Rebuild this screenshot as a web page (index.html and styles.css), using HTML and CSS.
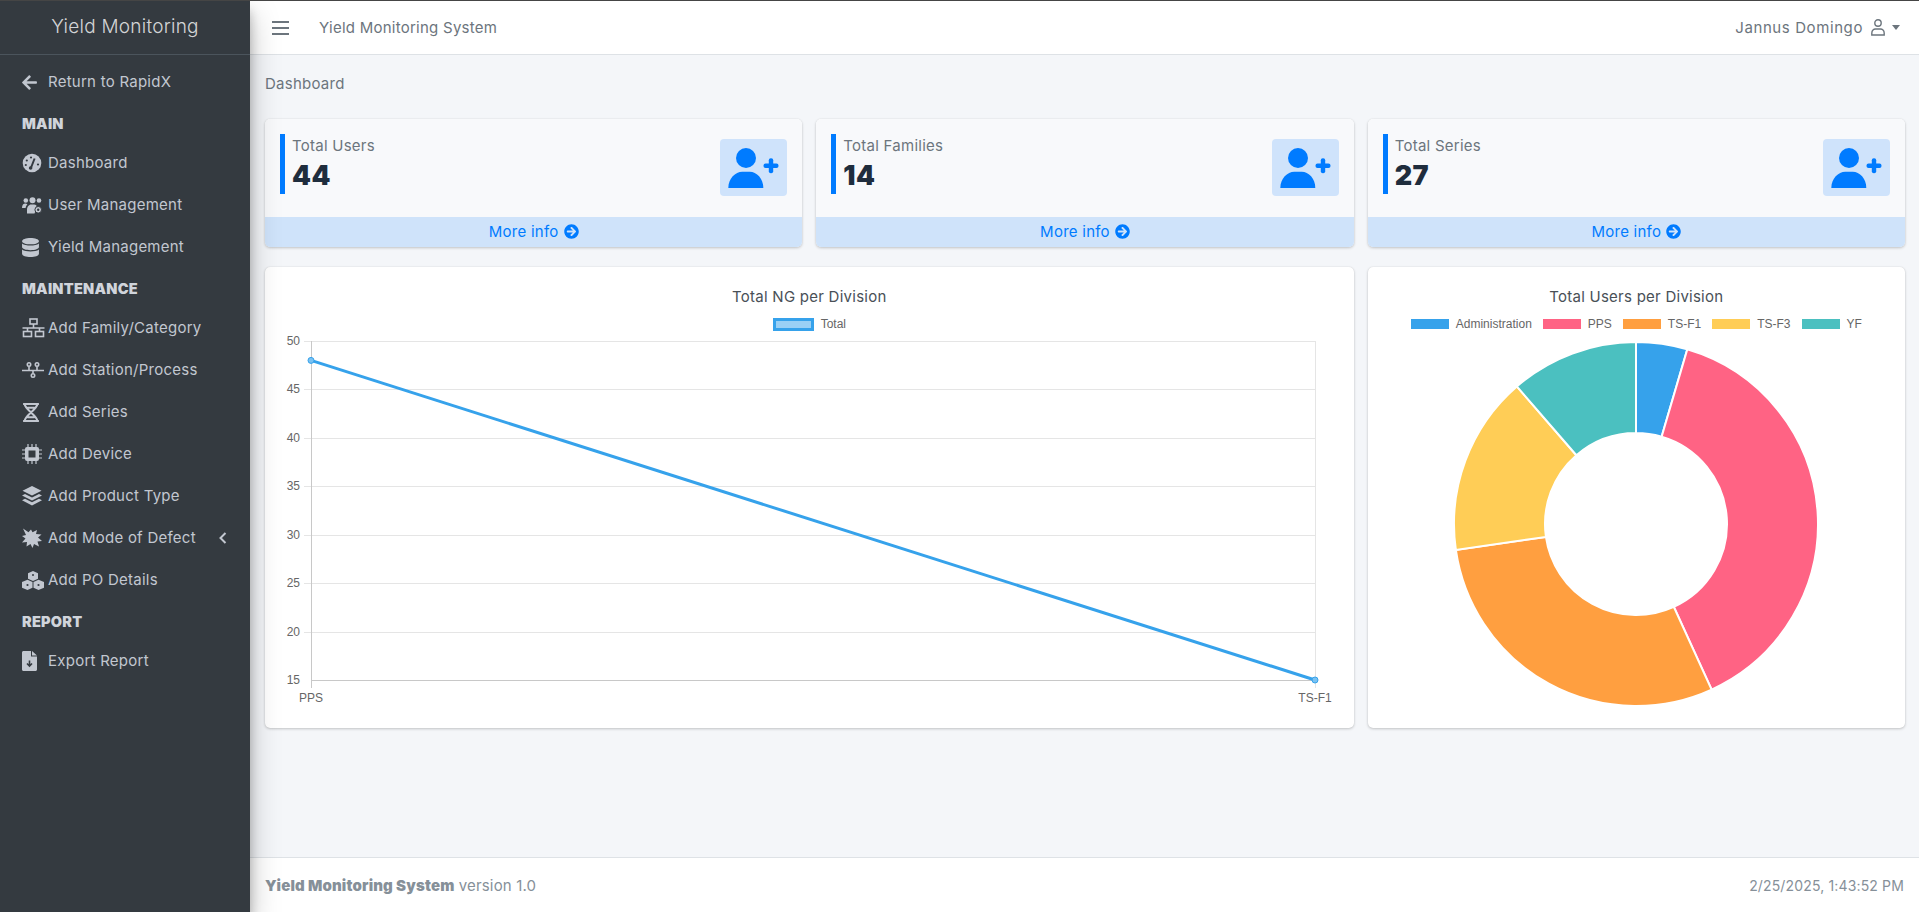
FILE: index.html
```html
<!DOCTYPE html>
<html lang="en">
<head>
  <meta charset="UTF-8">
  <meta name="viewport" content="width=device-width, initial-scale=1.0">
  <title>Yield Monitoring System</title>
  <link rel="stylesheet" href="styles.css">
</head>
<body>
  <svg class="defs" width="0" height="0">
    <symbol id="user-plus" viewBox="0 0 67 57">
      <circle cx="26" cy="19" r="10"/>
      <path d="M8.3 49c0-9.500 7-16.300 14-16.300h7.400c7 0 13.600 6.800 13.600 16.300z"/>
      <rect x="43.500" y="24.500" width="15" height="4.400" rx="2"/>
      <rect x="48.800" y="19.200" width="4.400" height="15" rx="2"/>
    </symbol>
    <symbol id="arrow-circle" viewBox="0 0 512 512">
      <path d="M256 8c137 0 248 111 248 248S393 504 256 504 8 393 8 256 119 8 256 8zm-28.900 143.600l75.500 72.400H120c-13.300 0-24 10.700-24 24v16c0 13.300 10.700 24 24 24h182.600l-75.500 72.400c-9.700 9.300-9.900 24.800-.4 34.300l11 10.900c9.400 9.400 24.600 9.400 33.900 0L404.300 273c9.400-9.400 9.400-24.600 0-33.900L271.600 106.300c-9.400-9.400-24.600-9.400-33.900 0l-11 11c-9.400 9.600-9.200 25.100.4 34.300z"/>
    </symbol>
  </svg>

  <!-- Sidebar -->
  <aside class="sidebar">
    <div class="brand">Yield Monitoring</div>
    <nav class="side-nav">
      <a class="side-link">
        <svg class="side-icon" viewBox="0 0 448 512" width="15" height="17"><path d="M257.500 445.100l-22.200 22.200c-9.400 9.400-24.600 9.400-33.900 0L7 273c-9.400-9.400-9.400-24.600 0-33.900L201.400 44.700c9.400-9.400 24.600-9.400 33.900 0l22.200 22.200c9.500 9.500 9.300 25-.4 34.300L136.600 216H424c13.300 0 24 10.700 24 24v32c0 13.300-10.700 24-24 24H136.600l120.500 114.800c9.800 9.300 10 24.800.4 34.300z"/></svg>
        <span>Return to RapidX</span>
      </a>

      <div class="side-header">MAIN</div>
      <a class="side-link">
        <svg class="side-icon" viewBox="0 0 20 20" width="20" height="20">
          <circle cx="10" cy="10" r="9.300"/>
          <path class="cut" d="M8.700 15.500L12.600 5.500" stroke-width="2"/>
          <circle class="dot" cx="9" cy="4.500" r="1.100"/><circle class="dot" cx="4.800" cy="7.500" r="1.100"/><circle class="dot" cx="3.800" cy="12" r="1.100"/><circle class="dot" cx="16" cy="11.500" r="1.100"/><circle class="dot" cx="8.600" cy="15" r="1.800"/>
        </svg>
        <span>Dashboard</span>
      </a>
      <a class="side-link">
        <svg class="side-icon" viewBox="0 0 21 17" width="21" height="17">
          <circle cx="3.800" cy="3.500" r="2.300"/><circle cx="10.500" cy="3.300" r="3"/><circle cx="17" cy="3.500" r="2.300"/>
          <path d="M0 11c0-3 1.500-4.400 3.300-4.400 1 0 1.600.3 2.100.8-1 .9-1.600 2-1.800 3.600zM5 16.500v-3.800C5 9.800 7 7.500 9 7.500h3c1 0 1.800.4 2.500 1l-1 5.500-1 2.500z"/>
          <circle class="gear" cx="16.200" cy="12.800" r="3.300"/><circle class="dot" cx="16.200" cy="12.800" r="1.200"/>
        </svg>
        <span>User Management</span>
      </a>
      <a class="side-link">
        <svg class="side-icon" viewBox="0 0 16 18" width="17" height="19">
          <path d="M0 3c0-1.700 3.600-3 8-3s8 1.300 8 3-3.600 3-8 3-8-1.300-8-3z"/>
          <path d="M0 5.200v3.300c0 1.700 3.600 3 8 3s8-1.300 8-3V5.200c-1.700 1.300-4.800 1.900-8 1.900S1.700 6.500 0 5.200z"/>
          <path d="M0 11v4c0 1.700 3.600 3 8 3s8-1.300 8-3v-4c-1.700 1.300-4.800 1.800-8 1.800S1.700 12.300 0 11z"/>
        </svg>
        <span>Yield Management</span>
      </a>

      <div class="side-header">MAINTENANCE</div>
      <a class="side-link">
        <svg class="side-icon line" viewBox="0 0 22 20" width="23" height="20">
          <rect x="7.500" y="1" width="7" height="5"/><rect x="1" y="13.500" width="8" height="5"/><rect x="13" y="13.500" width="8" height="5"/>
          <path d="M11 6v4M0 10h22M5 10v3.500M17 10v3.500"/>
        </svg>
        <span>Add Family/Category</span>
      </a>
      <a class="side-link">
        <svg class="side-icon line" viewBox="0 0 22 16" width="22" height="16">
          <circle cx="7" cy="2.500" r="1.700"/><circle cx="15" cy="2.500" r="1.700"/><circle cx="11" cy="13.500" r="1.700"/>
          <path d="M0 8.500h22M7 4.500v4M15 4.500v4M11 8.500v3"/>
        </svg>
        <span>Add Station/Process</span>
      </a>
      <a class="side-link">
        <svg class="side-icon line bold" viewBox="0 0 17 18" width="18" height="19">
          <path d="M1 1h15M1 17h15M2.500 1c0 5 12 11 12 16M14.500 1c0 5-12 11-12 16M5 4.500h7M5 13.500h7"/>
        </svg>
        <span>Add Series</span>
      </a>
      <a class="side-link">
        <svg class="side-icon" viewBox="0 0 20 20" width="20" height="20">
          <rect x="3" y="3" width="14" height="14" rx="2"/>
          <rect class="hole" x="5.500" y="5.500" width="9" height="9"/>
          <path class="pins" d="M6 0v3M10 0v3M14 0v3M6 17v3M10 17v3M14 17v3M0 6h3M0 10h3M0 14h3M17 6h3M17 10h3M17 14h3"/>
        </svg>
        <span>Add Device</span>
      </a>
      <a class="side-link">
        <svg class="side-icon" viewBox="0 0 20 20" width="20" height="20">
          <path d="M10 0l9.500 4.800L10 9.600.5 4.800z"/>
          <path d="M3 8l7 3.500L17 8l3 1.500-10 5-10-5z"/>
          <path d="M3 12.800l7 3.500 7-3.500 3 1.500-10 5.200-10-5.200z"/>
        </svg>
        <span>Add Product Type</span>
      </a>
      <a class="side-link">
        <svg class="side-icon" viewBox="0 0 20 20" width="20" height="20">
          <path d="M1 .5l5.500 3.800L9 1.500l1.500 2.800L15 2l-1 4 5.500.5-3.500 3 4 3.500-4.500.5 1.500 5-5-2.500L10.500 20 8.500 16l-4 2.500.5-4.500-5 .5 3.500-4L0 8l4-1z"/>
        </svg>
        <span>Add Mode of Defect</span>
        <svg class="chevron" viewBox="0 0 8 12" width="8" height="12"><path d="M6.500 1L1.500 6l5 5"/></svg>
      </a>
      <a class="side-link">
        <svg class="side-icon" viewBox="0 0 22 19" width="22" height="19">
          <path d="M11 0l5 2.200v5.600l-5 2.200-5-2.200V2.200z"/>
          <path d="M5.500 8.700l5 2.200v5.900L5.500 19 0 16.800v-5.900z"/>
          <path d="M16.500 8.700l5.500 2.200v5.900L16.500 19l-5-2.200v-5.900z"/>
          <circle class="dot" cx="11" cy="4" r="1"/><circle class="dot" cx="5.500" cy="14" r="1.100"/><circle class="dot" cx="16.500" cy="14" r="1.100"/>
        </svg>
        <span>Add PO Details</span>
      </a>

      <div class="side-header">REPORT</div>
      <a class="side-link">
        <svg class="side-icon" viewBox="0 0 15 20" width="15" height="20">
          <path d="M1.500 0H9v5.500h6V18.500c0 .8-.7 1.500-1.500 1.500h-12C.7 20 0 19.300 0 18.500v-17C0 .7.700 0 1.500 0zM10 0l5 4.500h-5z"/>
          <path class="cut" d="M7.500 9.500v5M5 12.500l2.500 2.500 2.500-2.500" stroke-width="1.600"/>
        </svg>
        <span>Export Report</span>
      </a>
    </nav>
  </aside>

  <div class="main">
    <!-- Top navbar -->
    <header class="navbar">
      <div class="hamburger"><i></i><i></i><i></i></div>
      <span class="navbar-title">Yield Monitoring System</span>
      <div class="user-menu">
        <span class="user-name">Jannus Domingo</span>
        <svg class="user-icon" viewBox="0 0 14 17" width="14" height="17">
          <circle cx="7" cy="4" r="3.200"/>
          <path d="M.8 16v-1.800c0-2.800 2-4.200 3.700-4.200h5c1.700 0 3.700 1.400 3.700 4.200V16z"/>
        </svg>
        <i class="caret"></i>
      </div>
    </header>

    <main class="content">
      <div class="page-title">Dashboard</div>

      <!-- Summary cards -->
      <div class="grid">
        <div class="card">
          <div class="card-body">
            <div class="stat">
              <div class="stat-label">Total Users</div>
              <div class="stat-value">44</div>
            </div>
            <div class="stat-icon"><svg width="67" height="57"><use href="#user-plus"/></svg></div>
          </div>
          <a class="card-footer">More info <svg width="15" height="15"><use href="#arrow-circle"/></svg></a>
        </div>
        <div class="card">
          <div class="card-body">
            <div class="stat">
              <div class="stat-label">Total Families</div>
              <div class="stat-value">14</div>
            </div>
            <div class="stat-icon"><svg width="67" height="57"><use href="#user-plus"/></svg></div>
          </div>
          <a class="card-footer">More info <svg width="15" height="15"><use href="#arrow-circle"/></svg></a>
        </div>
        <div class="card">
          <div class="card-body">
            <div class="stat">
              <div class="stat-label">Total Series</div>
              <div class="stat-value">27</div>
            </div>
            <div class="stat-icon"><svg width="67" height="57"><use href="#user-plus"/></svg></div>
          </div>
          <a class="card-footer">More info <svg width="15" height="15"><use href="#arrow-circle"/></svg></a>
        </div>

        <!-- Line chart -->
        <div class="card chart-card wide">
          <div class="chart-title">Total NG per Division</div>
          <div class="legend">
            <span class="legend-item"><i class="swatch swatch-line"></i>Total</span>
          </div>
          <svg class="plot" viewBox="0 1 1088 380" width="1088" height="380">
            <g class="grid-lines">
              <path d="M39 9.500H1050.500M39 57.500H1050.500M39 106.500H1050.500M39 154.500H1050.500M39 203.500H1050.500M39 251.500H1050.500M39 300.500H1050.500M1050.500 9V356"/>
            </g>
            <path class="axis-lines" d="M46.500 9V356M46 348.500H1050.500"/>
            <g class="ticks">
              <text x="35" y="13">50</text>
              <text x="35" y="61">45</text>
              <text x="35" y="110">40</text>
              <text x="35" y="158">35</text>
              <text x="35" y="207">30</text>
              <text x="35" y="255">25</text>
              <text x="35" y="304">20</text>
              <text x="35" y="352">15</text>
            </g>
            <g class="ticks-x">
              <text x="46" y="370">PPS</text>
              <text x="1050" y="370">TS-F1</text>
            </g>
            <path class="series" d="M46 28.400L1050 348"/>
            <circle class="point" cx="46" cy="28.400" r="3"/>
            <circle class="point" cx="1050" cy="348" r="3"/>
          </svg>
        </div>

        <!-- Donut chart -->
        <div class="card chart-card">
          <div class="chart-title">Total Users per Division</div>
          <div class="legend">
            <span class="legend-item"><i class="swatch c-blue"></i>Administration</span>
            <span class="legend-item"><i class="swatch c-pink"></i>PPS</span>
            <span class="legend-item"><i class="swatch c-orange"></i>TS-F1</span>
            <span class="legend-item"><i class="swatch c-yellow"></i>TS-F3</span>
            <span class="legend-item"><i class="swatch c-teal"></i>YF</span>
          </div>
          <svg class="donut" viewBox="-186 -186 372 372" width="372" height="372">
            <path class="s-blue" d="M0 -182A182 182 0 0 1 51.270 -174.630L25.630 -87.310A91 91 0 0 0 0 -91Z"/>
            <path class="s-pink" d="M51.270 -174.630A182 182 0 0 1 75.600 165.550L37.800 82.770A91 91 0 0 0 25.630 -87.310Z"/>
            <path class="s-orange" d="M75.600 165.550A182 182 0 0 1 -180.140 25.900L-90.070 12.950A91 91 0 0 0 37.800 82.770Z"/>
            <path class="s-yellow" d="M-180.140 25.900A182 182 0 0 1 -119.190 -137.540L-59.600 -68.770A91 91 0 0 0 -90.070 12.950Z"/>
            <path class="s-teal" d="M-119.190 -137.540A182 182 0 0 1 0 -182L0 -91A91 91 0 0 0 -59.600 -68.770Z"/>
          </svg>
        </div>
      </div>
    </main>

    <footer class="footer">
      <div><strong>Yield Monitoring System</strong> version 1.0</div>
      <div class="clock">2/25/2025, 1:43:52 PM</div>
    </footer>
  </div>
</body>
</html>
```

FILE: styles.css
```css
* {
  box-sizing: border-box;
}

html, body {
  height: 100%;
}

body {
  margin: 0;
  display: flex;
  overflow: hidden;
  border-top: 1px solid #454545;
  font-family: Inter, "Noto Sans", sans-serif;
  font-size: 15px;
  letter-spacing: 0.25px;
  color: #6c757d;
  background-color: #f4f6f9;
}

.defs {
  position: absolute;
}

/* Sidebar */
.sidebar {
  position: relative;
  z-index: 10;
  flex: 0 0 250px;
  background-color: #343a40;
  color: #c2c7d0;
  box-shadow: 0 14px 28px rgba(0, 0, 0, 0.25), 0 10px 10px rgba(0, 0, 0, 0.22);
}

.brand {
  height: 54px;
  line-height: 52px;
  text-align: center;
  font-size: 19px;
  font-weight: 300;
  color: rgba(255, 255, 255, 0.8);
  border-bottom: 1px solid #4b545c;
}

.side-nav {
  padding-top: 6px;
}

.side-link {
  display: flex;
  align-items: center;
  height: 42px;
  padding-left: 22px;
  position: relative;
}

.side-link span {
  position: absolute;
  left: 48px;
  top: 11px;
}

.side-icon {
  fill: #c2c7d0;
}

.side-icon .dot {
  fill: #343a40;
}

.side-icon .hole {
  fill: #343a40;
  stroke: #c2c7d0;
  stroke-width: 2;
}

.side-icon .pins {
  fill: none;
  stroke: #c2c7d0;
  stroke-width: 1.2;
}

.side-icon .cut {
  fill: none;
  stroke: #343a40;
}

.side-icon .gear {
  fill: #c2c7d0;
  stroke: #343a40;
  stroke-width: 1;
}

.side-icon.line {
  fill: none;
  stroke: #c2c7d0;
  stroke-width: 1.6;
}

.side-icon.bold {
  stroke-width: 2;
}

.chevron {
  position: absolute;
  left: 219px;
  fill: none;
  stroke: #c2c7d0;
  stroke-width: 2;
}

.side-header {
  height: 39px;
  padding: 3px 0 0 22px;
  line-height: 36px;
  font-size: 14.5px;
  font-weight: 900;
  color: #d0d4db;
}

/* Main column */
.main {
  flex: 1;
  min-width: 0;
  display: flex;
  flex-direction: column;
}

.navbar {
  display: flex;
  align-items: center;
  height: 54px;
  flex: none;
  padding: 0 19px 0 22px;
  background-color: #fff;
  border-bottom: 1px solid #dee2e6;
}

.hamburger {
  width: 17px;
  margin-right: 30px;
}

.hamburger i {
  display: block;
  height: 2px;
  margin: 4px 0;
  background-color: #6c757d;
}

.user-menu {
  margin-left: auto;
  display: flex;
  align-items: center;
}

.user-name {
  letter-spacing: 0.6px;
}

.user-icon {
  margin-left: 8px;
  fill: none;
  stroke: #6c757d;
  stroke-width: 1.400;
}

.caret {
  margin-left: 7px;
  border-top: 5px solid #6c757d;
  border-left: 4px solid transparent;
  border-right: 4px solid transparent;
}

.content {
  flex: 1;
  padding: 0 14px 0 15px;
}

.page-title {
  height: 64px;
  padding-top: 18px;
  line-height: 22px;
}

.grid {
  display: grid;
  grid-template-columns: repeat(3, 1fr);
  gap: 20px 14px;
}

.card {
  background-color: #fff;
  border-radius: 5px;
  overflow: hidden;
  box-shadow: 0 0 1px rgba(0, 0, 0, 0.125), 0 1px 3px rgba(0, 0, 0, 0.2);
}

.card-body {
  display: flex;
  justify-content: space-between;
  height: 98px;
  padding: 15px 15px 0 15px;
  background-color: #f8f9fb;
}

.stat {
  height: 60px;
  padding-left: 7px;
  border-left: 5px solid #007bff;
}

.stat-label {
  line-height: 24px;
}

.stat-value {
  margin-top: 2px;
  line-height: 32px;
  font-size: 27px;
  font-weight: 900;
  letter-spacing: 0.5px;
  color: #1f2d3d;
}

.stat-icon {
  width: 67px;
  height: 57px;
  margin-top: 5px;
  border-radius: 4px;
  background-color: #cfe3fb;
  fill: #007bff;
}

.stat-icon svg {
  display: block;
}

.card-footer {
  display: flex;
  align-items: center;
  justify-content: center;
  gap: 5px;
  height: 30px;
  padding-bottom: 2px;
  background-color: #cfe3fa;
  color: #007bff;
  fill: #007bff;
}

/* Charts */
.chart-card {
  height: 461px;
  padding-top: 21px;
  text-align: center;
}

.wide {
  grid-column: span 2;
}

.chart-title {
  line-height: 18px;
  color: #495057;
}

.legend {
  display: flex;
  justify-content: center;
  gap: 11px;
  height: 18px;
  margin-top: 9px;
  font-family: "Liberation Sans", Arial, sans-serif;
  font-size: 12px;
  letter-spacing: 0;
  line-height: 18px;
  color: #666;
}

.legend-item {
  display: flex;
  align-items: center;
  gap: 7px;
}

.swatch {
  width: 38px;
  height: 10px;
}

.swatch-line {
  width: 41px;
  height: 13px;
  background-color: rgba(54, 162, 235, 0.5);
  border: 3px solid #36a2eb;
}

.c-blue { background-color: #36a2eb; }
.c-pink { background-color: #ff6384; }
.c-orange { background-color: #ff9f40; }
.c-yellow { background-color: #ffcd56; }
.c-teal { background-color: #4bc0c0; }

.plot, .donut {
  display: block;
  font-family: "Liberation Sans", Arial, sans-serif;
  font-size: 12px;
  letter-spacing: 0;
}

.donut {
  margin: 5px auto 0;
}

.donut path {
  stroke: #fff;
  stroke-width: 2;
}

.s-blue { fill: #36a2eb; }
.s-pink { fill: #ff6384; }
.s-orange { fill: #ff9f40; }
.s-yellow { fill: #ffcd56; }
.s-teal { fill: #4bc0c0; }

.grid-lines path {
  fill: none;
  stroke: #e5e5e5;
}

.axis-lines {
  fill: none;
  stroke: #c8c8c8;
}

.ticks text {
  text-anchor: end;
  fill: #666;
}

.ticks-x text {
  text-anchor: middle;
  fill: #666;
}

.series {
  fill: none;
  stroke: #36a2eb;
  stroke-width: 3;
}

.point {
  fill: #7ac2f2;
  stroke: #36a2eb;
}

/* Footer */
.footer {
  display: flex;
  align-items: center;
  justify-content: space-between;
  height: 55px;
  flex: none;
  padding: 0 15px;
  background-color: #fff;
  border-top: 1px solid #dee2e6;
  letter-spacing: 0.15px;
  color: #869099;
}

.footer strong {
  font-weight: 900;
}

.clock {
  font-size: 14px;
}
```
